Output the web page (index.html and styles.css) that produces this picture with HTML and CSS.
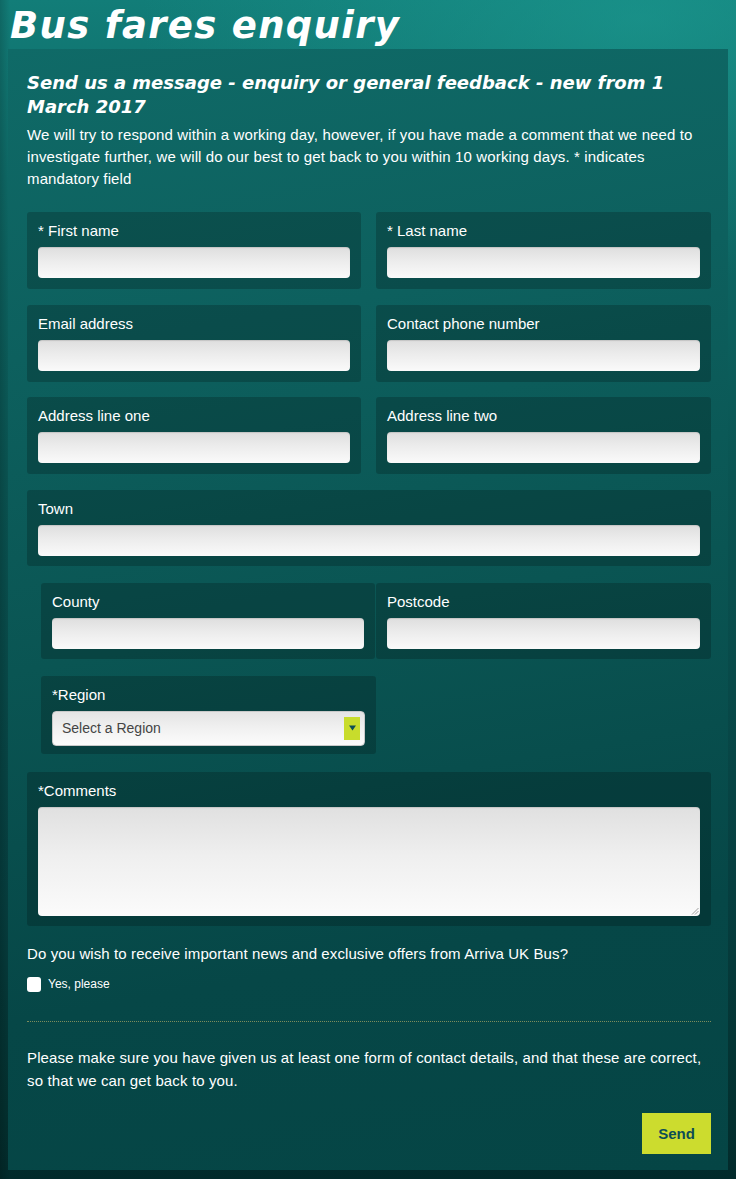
FILE: index.html
```html
<!DOCTYPE html>
<html lang="en">
<head>
<meta charset="utf-8">
<title>Bus fares enquiry</title>
<link rel="stylesheet" href="styles.css">
</head>
<body>
<div class="page">
  <h1 class="title">Bus fares enquiry</h1>
  <div class="panel">
    <h2 class="subtitle">Send us a message - enquiry or general feedback - new from 1 March 2017</h2>
    <p class="intro">We will try to respond within a working day, however, if you have made a comment that we need to investigate further, we will do our best to get back to you within 10 working days. * indicates mandatory field</p>

    <form class="form">
      <div class="row two">
        <div class="field"><label>* First name</label><div class="input"></div></div>
        <div class="field"><label>* Last name</label><div class="input"></div></div>
      </div>
      <div class="row two">
        <div class="field"><label>Email address</label><div class="input"></div></div>
        <div class="field"><label>Contact phone number</label><div class="input"></div></div>
      </div>
      <div class="row two">
        <div class="field"><label>Address line one</label><div class="input"></div></div>
        <div class="field"><label>Address line two</label><div class="input"></div></div>
      </div>
      <div class="row town">
        <div class="field"><label>Town</label><div class="input"></div></div>
      </div>
      <div class="row indent">
        <div class="field"><label>County</label><div class="input"></div></div>
        <div class="field"><label>Postcode</label><div class="input"></div></div>
      </div>
      <div class="row indent single">
        <div class="field region"><label>*Region</label>
          <div class="select"><span>Select a Region</span><span class="arrow"><svg width="7" height="6" viewBox="0 0 7 6"><path d="M0 0.5 H7 L3.5 5.5 Z" fill="#0d4d55"/></svg></span></div>
        </div>
      </div>
      <div class="row last">
        <div class="field comments"><label>*Comments</label><div class="textarea"><svg class="grip" width="8" height="8" viewBox="0 0 8 8"><path d="M7.5 1 L1 7.5 M7.5 4 L4 7.5" stroke="#888" stroke-width="0.8"/></svg></div></div>
      </div>
    </form>

    <p class="question">Do you wish to receive important news and exclusive offers from Arriva UK Bus?</p>
    <div class="check"><span class="box"></span><span class="check-label">Yes, please</span></div>
    <div class="divider"></div>
    <p class="note">Please make sure you have given us at least one form of contact details, and that these are correct, so that we can get back to you.</p>
    <div class="actions"><button type="button" class="send">Send</button></div>
  </div>
</div>
</body>
</html>
```

FILE: styles.css
```css
html, body {
  margin: 0;
  padding: 0;
}
body {
  width: 736px;
  min-height: 1179px;
  font-family: "Liberation Sans", Arial, sans-serif;
  color: #ffffff;
  background:
    linear-gradient(to right, rgba(0,0,0,0.16) 0px, rgba(0,0,0,0) 10px),
    radial-gradient(ellipse 500px 260px at 640px 20px, rgba(30,160,150,0.55), rgba(30,160,150,0) 100%),
    linear-gradient(180deg, #127d78 0%, #0e6a67 15%, #0a5553 40%, #063f40 75%, #03302f 95%, #022a2b 100%);
}
.page {
  padding: 0 8px 8px 8px;
}
.title {
  margin: 0;
  padding: 2px 0 0 2px;
  height: 47px;
  font-family: "DejaVu Sans", sans-serif;
  font-style: italic;
  font-weight: 700;
  font-size: 37px;
  line-height: 48px;
  letter-spacing: 1.3px;
  color: #ffffff;
  white-space: nowrap;
  position: relative;
  z-index: 1;
}
.panel {
  width: 720px;
  box-sizing: border-box;
  padding: 22px 17px 16px 19px;
  background: linear-gradient(170deg, #0f6a67 0%, #0d605e 25%, #0a5553 50%, #064747 78%, #054545 100%);
}
.subtitle {
  margin: 0;
  font-family: "DejaVu Sans", sans-serif;
  font-style: italic;
  font-weight: 700;
  font-size: 18px;
  line-height: 24px;
}
.intro {
  margin: 5px 0 0;
  font-size: 15px;
  line-height: 22px;
  letter-spacing: 0.13px;
}
.form {
  margin-top: 22px;
}
.row {
  display: grid;
  grid-template-columns: 1fr;
}
.row.two {
  grid-template-columns: 334px 335px;
  column-gap: 15px;
  margin-bottom: 15.5px;
}
.row.town {
  margin-bottom: 17px;
}
.row.town .field {
  padding-bottom: 10px;
}
.row.indent {
  margin-left: 14px;
  grid-template-columns: 334px 335px;
  column-gap: 1px;
  margin-bottom: 17px;
}
.row.indent .field {
  padding-bottom: 10px;
}
.row.single {
  grid-template-columns: 335px;
  margin-bottom: 18px;
}
.field {
  background: rgba(0, 0, 0, 0.2);
  border-radius: 3px;
  padding: 10px 11px 11px;
}
.field label {
  display: block;
  font-size: 15px;
  line-height: 18px;
  height: 18px;
}
.input {
  margin-top: 7px;
  height: 31px;
  border-radius: 4px;
  background: linear-gradient(to bottom, #dedede 0%, #ececec 45%, #fafafa 100%);
  box-shadow: inset 0 1px 1px rgba(0,0,0,0.12);
}
.row.indent .field.region {
  padding-bottom: 8px;
}
.select {
  margin-top: 7px;
  height: 35px;
  box-sizing: border-box;
  border-radius: 4px;
  border: 1px solid #c9c9c9;
  background: linear-gradient(to bottom, #e4e4e4 0%, #f1f1f1 50%, #fcfcfc 100%);
  display: flex;
  align-items: center;
  justify-content: space-between;
  padding: 0 4px 0 9px;
  color: #444444;
  font-size: 14px;
}
.arrow {
  width: 16px;
  height: 23px;
  background: #c8dc2c;
  display: flex;
  align-items: center;
  justify-content: center;
}
.comments {
  padding-bottom: 10px;
}
.textarea {
  margin-top: 7px;
  height: 109px;
  border-radius: 4px;
  background: linear-gradient(to bottom, #e0e0e0 0%, #efefef 45%, #fbfbfb 100%);
  box-shadow: inset 0 1px 1px rgba(0,0,0,0.12);
  position: relative;
}
.grip {
  position: absolute;
  right: 1px;
  bottom: 1px;
}
.question {
  margin: 18px 0 0;
  font-size: 15px;
  line-height: 20px;
  letter-spacing: 0.1px;
}
.check {
  margin-top: 13px;
  display: flex;
  align-items: center;
  gap: 7px;
}
.box {
  width: 14px;
  height: 15px;
  border-radius: 3px;
  background: #ffffff;
}
.check-label {
  font-size: 12px;
  line-height: 15px;
}
.divider {
  margin-top: 29px;
  border-top: 1px dotted #7c8c5c;
}
.note {
  margin: 24px 0 0;
  font-size: 15px;
  line-height: 23px;
  letter-spacing: 0.13px;
}
.actions {
  display: flex;
  justify-content: flex-end;
  margin-top: 21px;
}
.send {
  width: 69px;
  height: 41px;
  border: none;
  margin: 0;
  background: #ccdc2e;
  color: #0d4d55;
  font-family: "Liberation Sans", Arial, sans-serif;
  font-weight: 700;
  font-size: 15px;
  padding: 0;
}
```
